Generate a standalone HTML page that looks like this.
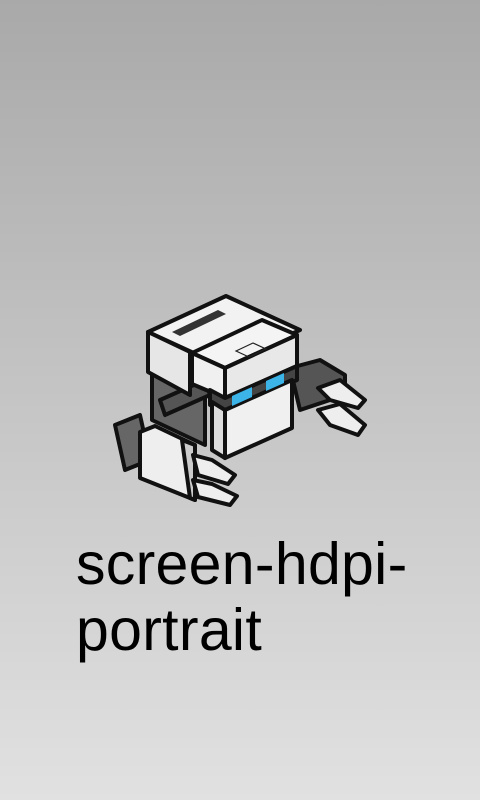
<!DOCTYPE html>
<html><head><style>
html,body{margin:0;padding:0}
body{width:480px;height:800px;background:linear-gradient(#a9a9a9,#e1e1e1);position:relative;overflow:hidden}
.t{position:absolute;left:76px;top:531px;font-family:"Liberation Sans",sans-serif;font-size:59px;line-height:66px;color:#000;letter-spacing:0.3px}
svg{position:absolute;left:0;top:0}
</style></head><body>
<svg width="480" height="800" viewBox="0 0 480 800">
<g stroke="#111" stroke-width="4" stroke-linejoin="round">
<polygon points="290,368 320,360 345,375 345,395 300,410" fill="#555"/>
<polygon points="318,388 340,380 365,400 358,408 330,400" fill="#eee"/>
<polygon points="318,410 340,404 365,425 358,435 330,425" fill="#eee"/>
<polygon points="152,340 205,365 205,445 152,420" fill="#666"/>
<polygon points="160,400 205,380 210,395 165,415" fill="#555"/>
<polygon points="115,425 140,415 150,460 125,470" fill="#666"/>
<polygon points="148,332 226,296 300,330 222,366" fill="#f2f2f2"/>
<polygon points="148,332 190,352 190,395 148,372" fill="#e6e6e6"/>
<polygon points="192,353 262,320 297,335 225,368" fill="#f4f4f4"/>
<polygon points="192,353 225,368 225,398 192,384" fill="#f0f0f0"/>
<polygon points="225,368 297,335 297,366 225,398" fill="#e8e8e8"/>
<polygon points="210,390 225,398 297,366 297,380 225,412 210,405" fill="#444"/>
<polygon points="212,402 225,410 225,458 212,450" fill="#ddd"/>
<polygon points="225,410 292,380 292,428 225,458" fill="#f0f0f0"/>
<polygon points="140,432 155,426 195,445 195,500 140,478" fill="#eee"/>
<polygon points="182,440 195,445 195,500 190,498" fill="#ccc"/>
<polygon points="193,455 212,460 235,475 228,484 198,475" fill="#eee"/>
<polygon points="193,480 212,484 237,496 230,505 198,497" fill="#eee"/>
</g>
<polygon points="172,332 218,310 226,314 180,336" fill="#333"/>
<polygon points="236,351 253,343 266,349 249,357" fill="none" stroke="#222" stroke-width="1.2"/>
<polygon points="232,396 252,387 252,397 232,406" fill="#3cb4e8"/>
<polygon points="266,381 284,373 284,383 266,391" fill="#3cb4e8"/>
</svg>
<div class="t">screen-hdpi-<br>portrait</div>
</body></html>
